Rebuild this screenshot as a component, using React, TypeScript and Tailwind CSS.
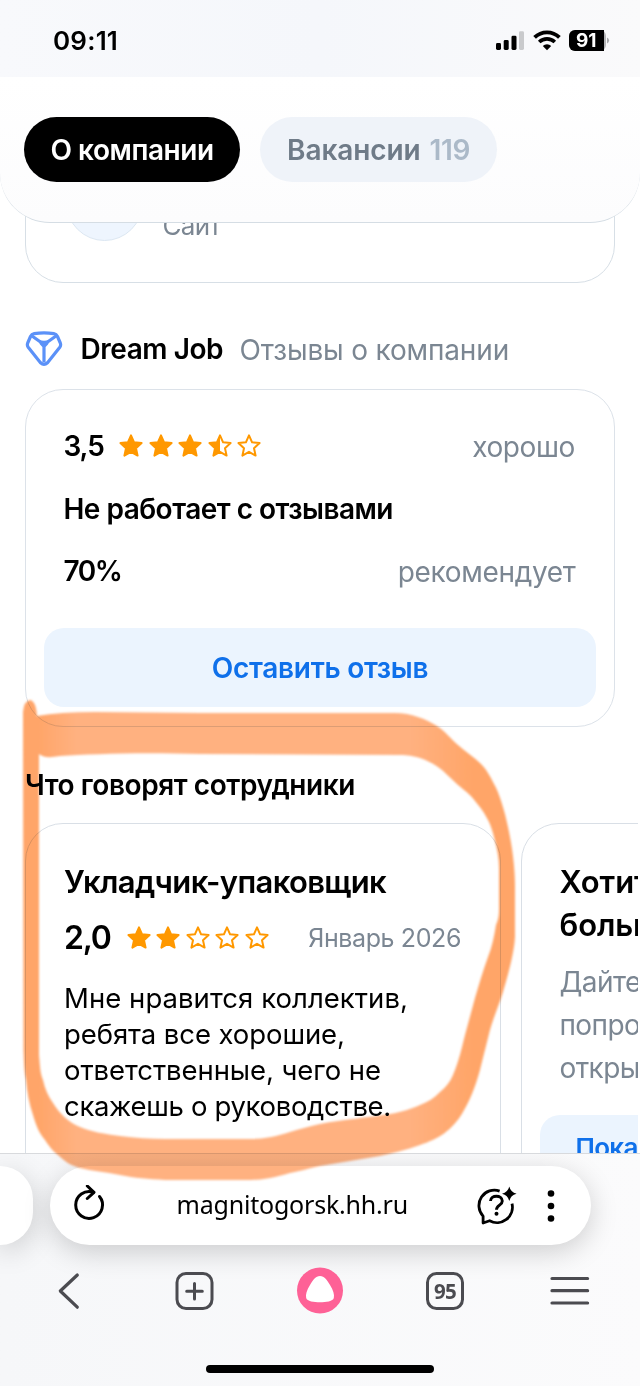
import clsx from "clsx";

const STAR =
  "M12 1.4 15.1 8.3 22.6 9.1 17 14.2 18.6 21.6 12 17.8 5.4 21.6 7 14.2 1.4 9.1 8.9 8.3Z";
const HALF_STAR = "M12 1.4 8.9 8.3 1.4 9.1 7 14.2 5.4 21.6 12 17.8Z";

function Star({ fill }: { fill: number }) {
  return (
    <svg viewBox="0 0 24 24" className="w-6 h-6 shrink-0">
      {fill > 0 && <path d={fill === 1 ? STAR : HALF_STAR} fill="#ff9800" />}
      <path
        d={STAR}
        fill="none"
        stroke="#ff9800"
        strokeWidth={2}
        strokeLinejoin="round"
      />
    </svg>
  );
}

function Rating({ value, className }: { value: number; className?: string }) {
  return (
    <div className={clsx("flex gap-[5.5px]", className)}>
      {[0, 1, 2, 3, 4].map((i) => (
        <Star key={i} fill={Math.max(0, Math.min(1, value - i))} />
      ))}
    </div>
  );
}

function StatusBar() {
  return (
    <div className="h-[77px] shrink-0 flex items-start justify-between pl-[53px] pr-[34px] bg-linear-to-r from-[#f8f9fc] via-[#f5f7fb] to-[#fafafb]">
      <span className="mt-[21px] text-[26px] leading-10 font-semibold tracking-[0.2px]">
        09:11
      </span>
      <div className="mt-[30px] flex items-start">
        <svg viewBox="0 0 29 21" className="w-[29px] h-[21px]">
          <rect x="0" y="13" width="5" height="7" rx="1.4" />
          <rect x="7.7" y="10" width="5" height="10" rx="1.4" />
          <rect x="15.5" y="5.7" width="5" height="14.3" rx="1.4" />
          <rect x="23" y="1.3" width="5" height="18.7" rx="1.4" fill="#c9cacc" />
        </svg>
        <svg viewBox="0 0 28 21" className="ml-[8px] w-7 h-[21px]" fill="none" stroke="#000">
          <path d="M1.6 7.4a17.6 17.6 0 0 1 24.8 0" strokeWidth="3.8" />
          <path d="M6.2 12a11.2 11.2 0 0 1 15.6 0" strokeWidth="3.6" />
          <path d="M14 20.2 9.8 15.9a6 6 0 0 1 8.4 0Z" fill="#000" stroke="none" />
        </svg>
        <div className="ml-[8px] w-[37px] h-[21px] rounded-[6px] bg-[#b4b5b7]">
          <div className="w-[34.5px] h-full rounded-l-[6px] bg-black text-white text-[19px] leading-[21px] font-bold text-center">
            91
          </div>
        </div>
        <svg viewBox="0 0 3 21" className="w-[3px] h-[21px] ml-px -mr-1">
          <path d="M0 7.5a3.2 3.2 0 0 1 0 6Z" fill="#a9aaac" />
        </svg>
      </div>
    </div>
  );
}

function Tabs() {
  return (
    <div className="relative z-10 h-[146px] shrink-0 flex items-start gap-5 pt-10 pl-[24px] bg-linear-to-b from-white to-[#fcfcfd] border-b border-[#d5dde4] rounded-b-[50px]">
      <button className="w-[216px] h-[65px] rounded-full bg-black text-white text-[28px] font-semibold tracking-[-0.45px]">
        О компании
      </button>
      <button className="w-[237px] h-[65px] rounded-full bg-[#eff3f9] text-[#6f7b88] text-[28px] font-semibold tracking-[-0.1px]">
        Вакансии <span className="ml-0.5 tracking-[-0.4px] text-[#abb9c8]">119</span>
      </button>
    </div>
  );
}

function SiteCard() {
  return (
    <div className="-mt-[53px] mx-[25px] h-[113px] shrink-0 flex border border-[#d7dfe6] rounded-b-[38px]">
      <div className="-mt-[7px] ml-[40px] size-[77px] rounded-full bg-[#eef5fe] border border-[#dce7f2]" />
      <span className="mt-[35px] ml-[19.5px] text-[26px] leading-10 tracking-[-0.7px] text-[#7b8692]">
        Сайт
      </span>
    </div>
  );
}

function DreamJobLogo() {
  return (
    <svg
      viewBox="0 0 38 36"
      className="w-[38px] h-9"
      fill="none"
      stroke="#5b91f8"
      strokeLinejoin="round"
      strokeLinecap="round"
    >
      <path
        d="M9.2 2.7Q19 1 28.8 2.7Q31.4 3.1 32.5 5.5L35.3 12Q36.2 14.4 34.8 16.3L22.5 31.8Q19 35 15.5 31.8L3.2 16.3Q1.8 14.4 2.7 12L5.5 5.5Q6.6 3.1 9.2 2.7Z"
        strokeWidth="3.2"
      />
      <path d="M7 5 15.5 11M31 5 22.5 11" strokeWidth="3.2" />
      <path
        d="M13 9Q19 10.4 25 9L23 13.5 20.6 16V31.5H17.4V16L15 13.5Z"
        fill="#5b91f8"
        stroke="none"
      />
    </svg>
  );
}

function ReviewsSummary() {
  return (
    <>
      <div className="mt-[46px] ml-[25px] h-10 shrink-0 flex items-center text-[28px] whitespace-nowrap">
        <DreamJobLogo />
        <span className="ml-[17.5px] font-semibold tracking-[-0.45px]">Dream Job</span>
        <span className="ml-[16.5px] mt-px tracking-[-0.16px] text-[#7b8692]">
          Отзывы о компании
        </span>
      </div>
      <div className="mt-5 mx-[25px] h-[338px] shrink-0 flex flex-col pt-[25px] px-[18px] border border-[#dce2e9] rounded-[38px] text-[28px]">
        <div className="h-[62.5px] flex items-center px-[19.5px]">
          <span className="font-semibold tracking-[-1.1px]">3,5</span>
          <Rating value={3.5} className="ml-[15.5px]" />
          <span className="ml-auto mr-[1.5px] mt-px tracking-[-0.4px] text-[#7b8692]">
            хорошо
          </span>
        </div>
        <div className="h-[62.5px] flex items-center px-[19.5px] font-semibold tracking-[-0.52px]">
          Не работает с отзывами
        </div>
        <div className="h-[62.5px] flex items-center justify-between px-[19.5px]">
          <span className="font-semibold tracking-[-1.5px]">70%</span>
          <span className="mr-px mt-px tracking-[-0.33px] text-[#7b8692]">рекомендует</span>
        </div>
        <button className="mt-[25px] h-[79px] pt-0.5 rounded-[20px] bg-[#ebf4fe] text-[#0f70ea] font-semibold tracking-[-0.3px]">
          Оставить отзыв
        </button>
      </div>
    </>
  );
}

function EmployeeReviews() {
  return (
    <>
      <h2 className="mt-[38px] ml-[25px] h-10 shrink-0 text-[28px] leading-10 font-semibold tracking-[-0.42px]">
        Что говорят сотрудники
      </h2>
      <div className="mt-[18px] w-[638px] shrink-0 flex gap-5 pl-[25px] overflow-hidden whitespace-nowrap">
        <div className="w-[475.5px] h-[400px] shrink-0 pt-[38px] pl-[38px] pr-[38.5px] border border-[#d9dfe6] rounded-[38px]">
          <h3 className="text-[31px] leading-10 font-semibold tracking-[-0.64px]">
            Укладчик-упаковщик
          </h3>
          <div className="mt-[16px] h-10 flex items-center">
            <span className="text-[32px] font-semibold tracking-[-1.2px]">2,0</span>
            <Rating value={2} className="ml-[16px]" />
            <span className="ml-auto mt-0.5 text-[25px] tracking-[-0.4px] text-[#7b8692]">
              Январь 2026
            </span>
          </div>
          <p className="mt-[22px] text-[27.5px] leading-9">
            <span className="block tracking-[0.05px]">Мне нравится коллектив,</span>
            <span className="block tracking-[-0.08px]">ребята все хорошие,</span>
            <span className="block tracking-[-0.08px]">ответственные, чего не</span>
            <span className="block tracking-[-0.32px]">скажешь о руководстве.</span>
          </p>
        </div>
        <div className="w-[475px] h-[400px] shrink-0 pt-[36px] pl-[18px] border border-[#d9dfe6] rounded-[38px]">
          <h3 className="pl-5 text-[31px] leading-[43px] font-semibold tracking-[-0.1px]">
            Хотите
            <br />
            больше
          </h3>
          <p className="mt-[15px] pl-5 text-[28px] leading-[43px] tracking-[-0.6px] text-[#7b8692]">
            Дайте
            <br />
            попробовать
            <br />
            открыть
          </p>
          <div className="mt-[25px] h-[79px] pt-[13px] pl-[36px] rounded-[20px] bg-[#ebf4fe] text-[#0f70ea] text-[26px] leading-10 font-semibold tracking-[-0.7px]">
            Показать
          </div>
        </div>
      </div>
    </>
  );
}

function AddressBar() {
  return (
    <div className="mt-3 flex gap-[16.5px]">
      <div className="w-[33px] h-[79px] rounded-r-full bg-white shadow-[0_7px_28px_rgba(0,0,0,0.18)]" />
      <div className="w-[541.5px] h-[79px] flex items-center rounded-full bg-white shadow-[0_7px_28px_rgba(0,0,0,0.18)]">
        <svg
          viewBox="0 0 36 40"
          className="ml-[21px] -mt-px w-9 h-10"
          fill="none"
          stroke="#000"
          strokeWidth="3"
          strokeLinecap="round"
          strokeLinejoin="round"
        >
          <path d="M28.5 11.5A13.4 13.4 0 1 1 22.5 7.3" />
          <path d="M16.3 1 23 7.3 16.3 13.5" />
        </svg>
        <span className="ml-[70px] -mt-1 font-['Noto_Sans'] text-[25px] leading-10 tracking-[-0.2px]">
          magnitogorsk.hh.ru
        </span>
        <svg viewBox="0 0 42 42" className="ml-auto w-[42px] h-[42px]" fill="none" stroke="#000">
          <path
            d="M24.6 6.1A15.4 15.4 0 0 0 8.1 31.1V38L14.6 35.7A15.4 15.4 0 0 0 37 18.6"
            strokeWidth="2.8"
            strokeLinejoin="round"
          />
          <path
            d="M15.5 16C15.5 9.6 27.3 9.6 27.3 16C27.3 20.3 21.5 20 21.5 24.8"
            strokeWidth="2.9"
          />
          <circle cx="21.5" cy="28.7" r="2" fill="#000" stroke="none" />
          <path
            d="M34.3 1.6Q35.6 7.3 41.6 8.8Q35.6 10.2 34.3 16.1Q32.9 10.2 27 8.8Q32.9 7.3 34.3 1.6Z"
            fill="#000"
            stroke="none"
          />
        </svg>
        <svg viewBox="0 0 8 34" className="ml-[30px] mr-[36px] w-2 h-[34px]">
          <circle cx="4" cy="4.5" r="3.3" />
          <circle cx="4" cy="17" r="3.3" />
          <circle cx="4" cy="29.5" r="3.3" />
        </svg>
      </div>
    </div>
  );
}

function Toolbar() {
  return (
    <div className="mt-[22px] px-[46px] flex justify-between text-[#4b4b50]">
      <svg
        viewBox="0 0 48 48"
        className="size-12"
        fill="none"
        stroke="currentColor"
        strokeWidth="3.2"
        strokeLinecap="round"
        strokeLinejoin="round"
      >
        <path d="M31.3 8 14.3 24 31.3 40.2" />
      </svg>
      <svg
        viewBox="0 0 48 48"
        className="size-12"
        fill="none"
        stroke="currentColor"
        strokeWidth="3"
        strokeLinecap="round"
      >
        <rect x="6" y="6.5" width="35" height="35" rx="9" />
        <path d="M23.5 16.5v15.5M15.7 24.2h15.6" />
      </svg>
      <svg viewBox="0 0 48 48" className="size-12">
        <circle cx="24" cy="23.6" r="23" fill="#fe6196" />
        <path
          d="M24 9C28.5 9 30.6 12.5 34 18C37.3 23.4 38.6 27.5 37.8 31C37 34.3 30 35.3 24 35.3C18 35.3 11 34.3 10.2 31C9.4 27.5 10.7 23.4 14 18C17.4 12.5 19.5 9 24 9Z"
          fill="#fff"
        />
      </svg>
      <div className="size-12 p-[5px]">
        <div className="size-[38px] rounded-[10.5px] border-3 border-current text-center font-['Noto_Sans'] font-bold text-[20.5px] leading-8 tracking-[-0.8px]">
          95
        </div>
      </div>
      <svg
        viewBox="0 0 48 48"
        className="size-12"
        stroke="currentColor"
        strokeWidth="3.2"
        strokeLinecap="round"
      >
        <path d="M6 11.5h35.6M6 23.7h35.6M6 36h35.6" />
      </svg>
    </div>
  );
}

// Translucent marker stroke drawn by hand over the review
function Marker() {
  return (
    <svg
      viewBox="0 0 640 1386"
      className="absolute inset-0 z-20 w-full h-full mix-blend-multiply pointer-events-none"
    >
      <defs>
        <linearGradient id="ink" gradientUnits="userSpaceOnUse" x1="0" y1="0" x2="640" y2="0">
          <stop offset="0.06" stopColor="#ffa569" />
          <stop offset="0.12" stopColor="#ffb180" />
          <stop offset="0.64" stopColor="#ffb180" />
          <stop offset="0.74" stopColor="#ffa568" />
        </linearGradient>
        <filter id="soft" x="-5%" y="-5%" width="110%" height="110%">
          <feGaussianBlur stdDeviation="0.9" />
        </filter>
      </defs>
      <path
        filter="url(#soft)"
        fill="url(#ink)"
        d="M23 712Q24 701 30 700Q36 701 37 716Q60 712 95 712L200 713H395C411 713 426 719 437 726C446 732 450 738 458 745C466 752 474 757 480 763C487 770 490 776 494 784C499 792 505 812 508 827C512 845 515 867 515 885V937C514 955 507 978 503 992C499 1005 494 1016 490 1030C486 1046 483 1058 480 1070C475 1088 470 1100 463 1112C452 1131 438 1139 420 1145C406 1150 393 1153 380 1156L320 1166C307 1169 300 1171 290 1173C276 1177 263 1180 250 1180H165C148 1179 135 1178 120 1175C105 1172 92 1171 80 1168C69 1165 65 1161 58 1155C52 1150 49 1146 45 1140C39 1133 36 1125 33 1115C29 1103 27 1092 26 1080C24 1070 24 1062 23.5 1050Z
        M39 754V1055C40 1065 40 1073 43 1080C45 1089 48 1096 53 1103C60 1114 68 1122 80 1127C92 1132 105 1134 120 1136C135 1138 150 1139 165 1139H250C265 1139 277 1136 290 1132C300 1129 310 1126 320 1124C345 1119 366 1118 390 1114C402 1112 411 1109 420 1105C428 1102 434 1098 440 1092C446 1087 450 1082 453 1075C459 1061 462 1047 465 1035L475 998C479 984 483 971 488 957C492 947 494 937 496 925C498 920 499 916 499 910V868C499 858 497 849 495 841C493 832 491 826 488 820C484 812 480 807 475 801C470 794 464 790 458 785L442 770C435 764 428 761 420 758C413 756 408 755 400 755L200 754C140 752 90 754 60 756Q44 759 39 754Z"
        fillRule="evenodd"
      />
    </svg>
  );
}

export default function App() {
  return (
    <div className="relative w-[640px] h-[1386px] overflow-hidden flex flex-col bg-white text-black font-['Inter','Liberation_Sans',sans-serif]">
      <StatusBar />
      <main className="h-[1076px] shrink-0 flex flex-col overflow-hidden">
        <Tabs />
        <SiteCard />
        <ReviewsSummary />
        <EmployeeReviews />
      </main>
      <footer className="relative flex-1 overflow-hidden bg-linear-to-r from-[#f6f7f9] to-[#fbfbfc] border-t border-[#d8dadd]">
        <AddressBar />
        <Toolbar />
        <div className="mt-[49.5px] ml-[206px] w-[228px] h-2 rounded-full bg-black" />
      </footer>
      <Marker />
    </div>
  );
}
